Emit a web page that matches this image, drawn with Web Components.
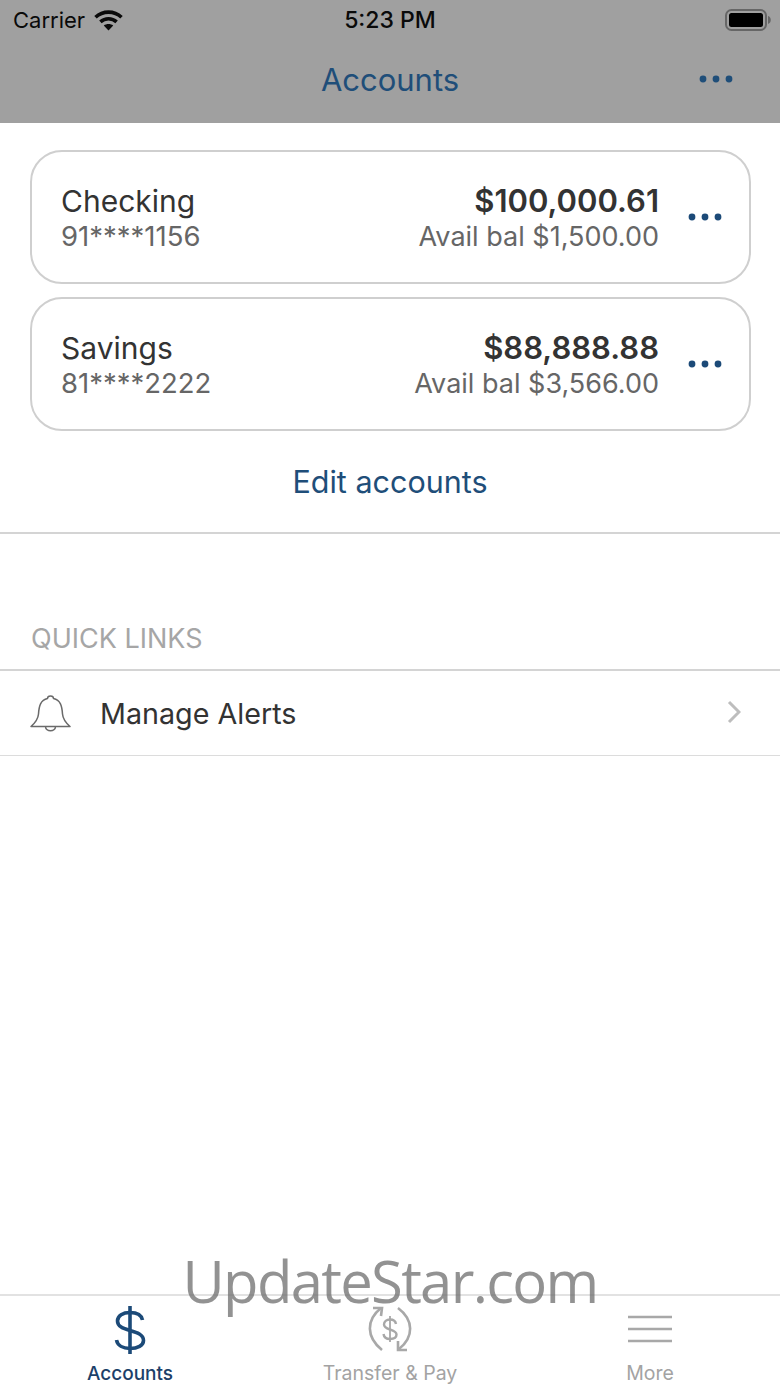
<!DOCTYPE html>
<html>
<head>
<meta charset="utf-8">
<title>Accounts</title>
<style>
    html, body { margin: 0; padding: 0; background: #fff; }
    body { font-family: Inter, "Liberation Sans", sans-serif; }
    .accounts {
        display: flex;
        flex-direction: column;
        gap: 13px;
        padding: 27px 29px 0 30px;
    }
</style>
</head>
<body>
<app-screen>
    <status-bar></status-bar>
    <nav-bar>Accounts</nav-bar>
    <section class="accounts">
        <account-card name="Checking" number="91****1156" balance="$100,000.61" avail="Avail bal $1,500.00"></account-card>
        <account-card name="Savings" number="81****2222" balance="$88,888.88" avail="Avail bal $3,566.00"></account-card>
    </section>
    <edit-link>Edit accounts</edit-link>
    <quick-links>
        <link-row>Manage Alerts</link-row>
    </quick-links>
    <tab-bar></tab-bar>
</app-screen>

<script>
const dots = (color) => /*html*/`
    <svg width="34" height="8" viewBox="0 0 34 8" fill="${color}">
        <circle cx="4" cy="4" r="3.4"/><circle cx="17" cy="4" r="3.4"/><circle cx="30" cy="4" r="3.4"/>
    </svg>`;

class AppScreen extends HTMLElement {
    constructor() {
        super();
        this.attachShadow({mode: "open"}).innerHTML = /*html*/`
            <style>
                :host {
                    display: flex;
                    flex-direction: column;
                    position: relative;
                    width: 780px;
                    height: 1387px;
                    overflow: hidden;
                    background: #fff;
                }
                .watermark {
                    position: absolute;
                    left: 0;
                    right: 0;
                    top: 1243px;
                    text-align: center;
                    font-family: "Open Sans", sans-serif;
                    font-size: 58px;
                    line-height: 76px;
                    letter-spacing: -1.7px;
                    color: rgba(110, 110, 110, .75);
                }
            </style>
            <slot></slot>
            <div class="watermark">UpdateStar.com</div>
        `;
    }
}

class StatusBar extends HTMLElement {
    constructor() {
        super();
        this.attachShadow({mode: "open"}).innerHTML = /*html*/`
            <style>
                :host {
                    display: grid;
                    grid-template-columns: 1fr auto 1fr;
                    align-items: center;
                    box-sizing: border-box;
                    height: 40px;
                    padding: 0 9px 0 13px;
                    background: #a0a0a0;
                    color: #0a0a0a;
                    font-size: 22px;
                }
                .left { display: flex; align-items: center; gap: 9px; }
                .time { font-weight: 500; font-size: 23px; margin-left: -4px; }
                .right { justify-self: end; display: flex; }
            </style>
            <div class="left">
                <span>Carrier</span>
                <svg width="29" height="22" viewBox="0 0 29 22" fill="none" stroke="#0a0a0a" stroke-width="3.6">
                    <path d="M1.500 8.200C8.800 1.400 20.200 1.400 27.500 8.200"/>
                    <path d="M6.400 12.800C11 8.700 18 8.700 22.600 12.800"/>
                    <path d="M14.500 21.500L9.800 16.600C12.400 14.600 16.600 14.600 19.200 16.600Z" fill="#0a0a0a" stroke="none"/>
                </svg>
            </div>
            <span class="time">5:23 PM</span>
            <div class="right">
                <svg width="46" height="24" viewBox="0 0 46 24">
                    <rect x="1" y="2" width="40" height="20" rx="5.500" fill="none" stroke="#666" stroke-width="2"/>
                    <rect x="4" y="5" width="34" height="14" rx="2.500" fill="#000"/>
                    <path d="M43 8v8c1.800-.6 2.800-2.200 2.800-4s-1-3.400-2.800-4z" fill="#666"/>
                </svg>
            </div>
        `;
    }
}

class NavBar extends HTMLElement {
    constructor() {
        super();
        this.attachShadow({mode: "open"}).innerHTML = /*html*/`
            <style>
                :host {
                    display: grid;
                    grid-template-columns: 1fr auto 1fr;
                    align-items: center;
                    box-sizing: border-box;
                    height: 83px;
                    padding: 0 47px 5px 47px;
                    background: #a0a0a0;
                    color: #1f4e79;
                    font-size: 31px;
                }
                .title { grid-column: 2; }
                .more { grid-column: 3; justify-self: end; display: flex; }
            </style>
            <span class="title"><slot></slot></span>
            <span class="more">${dots("#1f4e79")}</span>
        `;
    }
}

class AccountCard extends HTMLElement {
    constructor() {
        super();
        this.attachShadow({mode: "open"}).innerHTML = /*html*/`
            <style>
                :host {
                    display: grid;
                    grid-template-columns: 1fr auto 34px;
                    column-gap: 29px;
                    align-items: center;
                    box-sizing: border-box;
                    height: 134px;
                    padding: 0 27px 0 29px;
                    border: 2px solid #cfcfcf;
                    border-radius: 32px;
                    background: #fff;
                }
                .col { display: flex; flex-direction: column; padding-top: 3px; }
                .right { text-align: right; }
                .name { font-size: 30px; line-height: 36px; color: #333; }
                .number { font-size: 27.500px; line-height: 35px; color: #666; }
                .avail { font-size: 27px; line-height: 35px; color: #666; }
                .balance { font-size: 31px; line-height: 36px; font-weight: 600; color: #333; }
                .more { display: flex; }
            </style>
            <div class="col">
                <span class="name">${this.getAttribute("name")}</span>
                <span class="number">${this.getAttribute("number")}</span>
            </div>
            <div class="col right">
                <span class="balance">${this.getAttribute("balance")}</span>
                <span class="avail">${this.getAttribute("avail")}</span>
            </div>
            <span class="more">${dots("#1c4a78")}</span>
        `;
    }
}

class EditLink extends HTMLElement {
    constructor() {
        super();
        this.attachShadow({mode: "open"}).innerHTML = /*html*/`
            <style>
                :host {
                    display: flex;
                    justify-content: center;
                    align-items: center;
                    height: 100px;
                    padding-bottom: 1px;
                    border-bottom: 2px solid #d4d4d4;
                    color: #1f4e79;
                    font-size: 30.500px;
                }
            </style>
            <slot></slot>
        `;
    }
}

class QuickLinks extends HTMLElement {
    constructor() {
        super();
        this.attachShadow({mode: "open"}).innerHTML = /*html*/`
            <style>
                :host { display: block; padding-top: 88px; }
                .heading {
                    padding: 0 31px 13px;
                    font-size: 27px;
                    line-height: 34px;
                    color: #a6a6a6;
                    border-bottom: 2px solid #d4d4d4;
                }
            </style>
            <div class="heading">QUICK LINKS</div>
            <slot></slot>
        `;
    }
}

class LinkRow extends HTMLElement {
    constructor() {
        super();
        this.attachShadow({mode: "open"}).innerHTML = /*html*/`
            <style>
                :host {
                    display: flex;
                    align-items: center;
                    box-sizing: border-box;
                    height: 85px;
                    padding: 0 39px 0 30px;
                    border-bottom: 1px solid #dcdcdc;
                    color: #333;
                    font-size: 28.700px;
                }
                .bell { margin-right: 29px; display: flex; margin-top: -1px; }
                .label { flex: 1; }
                .chevron { display: flex; margin-top: -2px; }
            </style>
            <span class="bell">
                <svg width="41" height="38" viewBox="0 0 41 38" fill="none" stroke="#6a6a6a" stroke-width="1.500" stroke-linejoin="round">
                    <path d="M1 32.500C5 29 8 26 8.500 20C9 12 10.500 6 17.500 4.500C17.500 1 23.500 1 23.500 4.500C30.500 6 32 12 32.500 20C33 26 36 29 40 32.500Z"/>
                    <path d="M15.500 32.500C15.500 38 25.500 38 25.500 32.500"/>
                </svg>
            </span>
            <span class="label"><slot></slot></span>
            <span class="chevron">
                <svg width="14" height="24" viewBox="0 0 14 24" fill="none" stroke="#bdbdbd" stroke-width="3">
                    <path d="M2 2l10 10L2 22"/>
                </svg>
            </span>
        `;
    }
}

class TabBar extends HTMLElement {
    constructor() {
        super();
        this.attachShadow({mode: "open"}).innerHTML = /*html*/`
            <style>
                :host {
                    display: grid;
                    grid-template-columns: repeat(3, 1fr);
                    box-sizing: border-box;
                    margin-top: auto;
                    height: 93px;
                    border-top: 2px solid #e2e2e2;
                    font-size: 19.500px;
                    color: #a3a3a3;
                }
                .tab {
                    display: flex;
                    flex-direction: column;
                    align-items: center;
                    justify-content: flex-end;
                    gap: 8px;
                    padding-bottom: 2px;
                }
                .tab svg { display: block; }
                .active { color: #1c4069; font-weight: 500; font-size: 19px; }
            </style>
            <div class="tab active">
                <svg width="32" height="48" viewBox="0 0 32 48" fill="none" stroke="#1c4a78" stroke-width="3.600">
                    <path d="M16 0v48"/>
                    <path d="M28.500 14C27.500 9 22.500 6.500 16 6.500C9 6.500 3.500 9.500 3.500 15C3.500 20.500 9 22.500 16 24.500C23 26.500 29.500 28.500 29.500 34.500C29.500 39.500 23.500 42.500 16 42.500C9 42.500 3.500 39.500 2.500 34"/>
                </svg>
                <span>Accounts</span>
            </div>
            <div class="tab">
                <svg width="48" height="48" viewBox="0 0 48 48" fill="none" stroke="#a8a8a8" stroke-width="2.600">
                    <path d="M16 45C0 32 0 15 15 3"/>
                    <path d="M7 3h9l-1 8"/>
                    <path d="M32 3C48 15 48 32 33 44"/>
                    <path d="M32 36v9h9"/>
                    <path d="M24 11v26" stroke-width="1.800"/>
                    <path d="M30 19C29.500 16 27 14.500 24 14.500C20.500 14.500 18 16.500 18 19.500C18 22.500 21 23.500 24 24.500C27 25.500 30.500 26.500 30.500 29.500C30.500 32.500 27.500 34 24 34C20.500 34 18 32.500 17.500 29" stroke-width="2.400"/>
                </svg>
                <span>Transfer &amp; Pay</span>
            </div>
            <div class="tab">
                <svg width="44" height="48" viewBox="0 0 44 48" fill="none" stroke="#a8a8a8" stroke-width="2.400">
                    <path d="M0 12h44M0 24h44M0 36h44"/>
                </svg>
                <span>More</span>
            </div>
        `;
    }
}

customElements.define("app-screen", AppScreen);
customElements.define("status-bar", StatusBar);
customElements.define("nav-bar", NavBar);
customElements.define("account-card", AccountCard);
customElements.define("edit-link", EditLink);
customElements.define("quick-links", QuickLinks);
customElements.define("link-row", LinkRow);
customElements.define("tab-bar", TabBar);
</script>
</body>
</html>
